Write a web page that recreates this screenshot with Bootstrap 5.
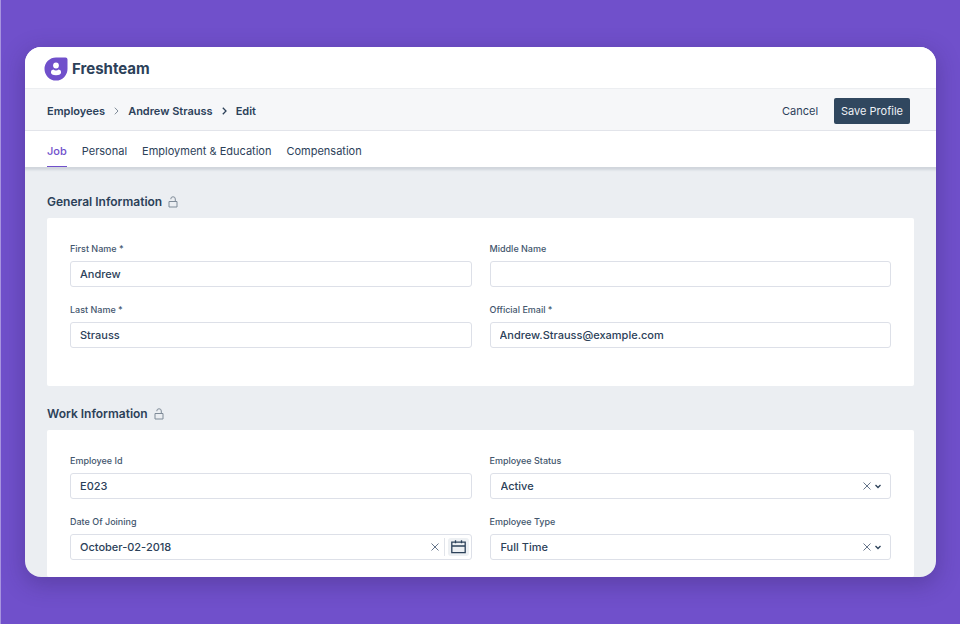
<!DOCTYPE html>
<html lang="en">
<head>
<meta charset="utf-8">
<meta name="viewport" content="width=device-width, initial-scale=1">
<title>Freshteam - Edit employee</title>
<link href="https://cdn.jsdelivr.net/npm/bootstrap@5.3.0/dist/css/bootstrap.min.css" rel="stylesheet">
<style>
  :root { --ink: #2c4159; --accent: #7050cb; --line: #dde0e8; }
  body {
    font-family: Inter, "Liberation Sans", sans-serif;
    font-size: 11px; line-height: 16px; color: var(--ink);
    background: var(--accent); border-left: 1px solid #a793df;
    padding: 47px 24px;
  }
  a { color: inherit; text-decoration: none; }
  .app-window { border-radius: 16px; background: #ebeef2; box-shadow: 0 6px 22px 2px rgba(45, 30, 90, .3); }
  .app-top { height: 41px; padding: 2px 19px 0; gap: 4px; }
  .brand-name { font-size: 15px; font-weight: 700; line-height: 20px; }
  .crumb-bar { height: 43px; padding: 2px 26px 0 22px; background: #f6f7f9; border-top: 1px solid #eceef1; border-bottom: 1px solid #e3e6eb; font-weight: 600; }
  .crumb-bar .breadcrumb { font-size: 11px; gap: 9px; }
  .action { font-size: 11px; line-height: 16px; border-radius: 2px; padding: 5px 8px; color: var(--ink); }
  .action-save, .action-save:hover { background: #30475f; color: #eef1f6; padding: 5px 7px; }
  .tab-bar { height: 36px; padding: 0 22px; gap: 15px; box-shadow: 0 2px 2px 1px #d1d6dc; }
  .tab-bar .nav-link { padding: 12px 0 7px; color: var(--ink); border-bottom: 1px solid transparent; }
  .tab-bar .nav-link.active { color: var(--accent); font-weight: 500; border-bottom-color: var(--accent); }
  .app-body { padding: 25px 22px 0; }
  .section-title { font-size: 12px; line-height: 20px; font-weight: 600; margin: 0 0 6px; gap: 6px; }
  .section-next { padding-top: 18px; }
  .panel { padding: 23px 23px 38px; border-radius: 2px; }
  .panel-last { padding-bottom: 17px; }
  .fields { --bs-gutter-x: 18px; --bs-gutter-y: 15px; }
  .fields label { font-size: 9px; font-weight: 500; line-height: 16px; margin-bottom: 4px; color: #43566d; display: block; }
  .field-box { border: 1px solid var(--line); border-radius: 3px; height: 26px; background: #fff; padding: 0 9px; }
  .field-box .form-control, .field-box .form-select {
    font-size: 11px; font-weight: 500; line-height: 16px; color: var(--ink);
    border: 0; padding: 0; background: none; min-height: 0; border-radius: 0;
  }
  .field-box .form-select { padding-left: 1px; }
  .icon-button { border: 0; background: none; padding: 0; display: flex; color: #66758a; }
  .date-box { padding-right: 2px; }
  .date-split { width: 1px; height: 18px; background: #e1e4ea; margin: 0 3px 0 5px; }
  .calendar-button { background: #edf0f3; border-radius: 3px; padding: 1px 3px; color: var(--ink); }
  svg { display: block; flex: none; }
  .line-icon { fill: none; stroke: currentColor; }
  .muted-icon { color: #7f8b98; }
</style>
<script src="https://cdn.jsdelivr.net/npm/bootstrap@5.3.0/dist/js/bootstrap.bundle.min.js" defer></script>
</head>
<body class="min-vh-100">
<div class="app-window overflow-hidden">
  <header class="app-top bg-white d-flex align-items-center">
    <svg width="24" height="24" viewBox="0 0 24 24" aria-hidden="true">
      <path fill="#7050cb" d="M12 .5h9.500q2 0 2 2V12A11.500 11.500 0 1 1 12 .5z"/>
      <circle cx="12" cy="8.500" r="2.900" fill="#fff"/>
      <path fill="#fff" d="M6.900 15q0-2.300 2.500-2.500 1.100 1 2.600 1t2.600-1q2.500.2 2.500 2.500 0 3.200-5.100 3.200T6.900 15z"/>
    </svg>
    <span class="brand-name">Freshteam</span>
  </header>
  <div class="crumb-bar d-flex align-items-center justify-content-between">
    <nav aria-label="Breadcrumb">
      <div class="breadcrumb mb-0 align-items-center">
        <a href="#">Employees</a>
        <svg class="line-icon muted-icon" width="5" height="8" viewBox="0 0 5 8" aria-hidden="true"><path d="M.8.7 4 4 .8 7.300"/></svg>
        <a href="#">Andrew Strauss</a>
        <svg class="line-icon" width="5" height="8" viewBox="0 0 5 8" stroke-width="1.300" aria-hidden="true"><path d="M.8.7 4 4 .8 7.300"/></svg>
        <span aria-current="page">Edit</span>
      </div>
    </nav>
    <div class="d-flex gap-2">
      <button type="button" class="btn action border-0">Cancel</button>
      <button type="button" class="btn action action-save border-0">Save Profile</button>
    </div>
  </div>
  <nav class="nav tab-bar bg-white position-relative" aria-label="Profile sections">
    <a class="nav-link active" href="#" aria-current="true">Job</a>
    <a class="nav-link" href="#">Personal</a>
    <a class="nav-link" href="#">Employment &amp; Education</a>
    <a class="nav-link" href="#">Compensation</a>
  </nav>
  <main class="app-body">
    <form>
      <section>
        <h2 class="section-title d-flex align-items-center">General Information
          <svg class="line-icon muted-icon" width="10" height="12" viewBox="0 0 10 12" aria-hidden="true"><path d="M1 5.500h8v5.500H1zM2.800 3.200V3a2.200 2.200 0 0 1 4.500 0v2.500"/></svg>
        </h2>
        <div class="panel bg-white">
          <div class="row fields">
            <div class="col-6">
              <label for="first">First Name *</label>
              <div class="field-box d-flex align-items-center"><input class="form-control" id="first" type="text" value="Andrew"></div>
            </div>
            <div class="col-6">
              <label for="middle">Middle Name</label>
              <div class="field-box d-flex align-items-center"><input class="form-control" id="middle" type="text"></div>
            </div>
            <div class="col-6">
              <label for="last">Last Name *</label>
              <div class="field-box d-flex align-items-center"><input class="form-control" id="last" type="text" value="Strauss"></div>
            </div>
            <div class="col-6">
              <label for="email">Official Email *</label>
              <div class="field-box d-flex align-items-center"><input class="form-control" id="email" type="email" value="Andrew.Strauss@example.com"></div>
            </div>
          </div>
        </div>
      </section>
      <section class="section-next">
        <h2 class="section-title d-flex align-items-center">Work Information
          <svg class="line-icon muted-icon" width="10" height="12" viewBox="0 0 10 12" aria-hidden="true"><path d="M1 5.500h8v5.500H1zM2.800 3.200V3a2.200 2.200 0 0 1 4.500 0v2.500"/></svg>
        </h2>
        <div class="panel panel-last bg-white">
          <div class="row fields">
            <div class="col-6">
              <label for="empid">Employee Id</label>
              <div class="field-box d-flex align-items-center"><input class="form-control" id="empid" type="text" value="E023"></div>
            </div>
            <div class="col-6">
              <label for="status">Employee Status</label>
              <div class="field-box d-flex align-items-center gap-1">
                <select class="form-select" id="status"><option>Active</option></select>
                <button type="button" class="icon-button" aria-label="Clear status"><svg class="line-icon" width="8" height="8" viewBox="0 0 8 8"><path d="m.5.5 7 7M7.500.5l-7 7"/></svg></button>
                <svg class="line-icon" width="6" height="8" viewBox="0 0 6 8" stroke-width="1.300" aria-hidden="true"><path d="m.5 3 2.500 2.500L5.500 3"/></svg>
              </div>
            </div>
            <div class="col-6">
              <label for="joined">Date Of Joining</label>
              <div class="field-box date-box d-flex align-items-center">
                <input class="form-control" id="joined" type="text" value="October-02-2018">
                <button type="button" class="icon-button" aria-label="Clear date"><svg class="line-icon" width="8" height="8" viewBox="0 0 8 8"><path d="m.5.5 7 7M7.500.5l-7 7"/></svg></button>
                <span class="date-split"></span>
                <button type="button" class="icon-button calendar-button" aria-label="Pick a date"><svg class="line-icon" width="15" height="16" viewBox="0 0 15 16" stroke-width="1.300"><path d="M.8 3.200h13.400v10.500H.8zM.8 7h13.400M4.500 1.200v3M10.500 1.200v3"/></svg></button>
              </div>
            </div>
            <div class="col-6">
              <label for="type">Employee Type</label>
              <div class="field-box d-flex align-items-center gap-1">
                <select class="form-select" id="type"><option>Full Time</option></select>
                <button type="button" class="icon-button" aria-label="Clear type"><svg class="line-icon" width="8" height="8" viewBox="0 0 8 8"><path d="m.5.5 7 7M7.500.5l-7 7"/></svg></button>
                <svg class="line-icon" width="6" height="8" viewBox="0 0 6 8" stroke-width="1.300" aria-hidden="true"><path d="m.5 3 2.500 2.500L5.500 3"/></svg>
              </div>
            </div>
          </div>
        </div>
      </section>
    </form>
  </main>
</div>
</body>
</html>
